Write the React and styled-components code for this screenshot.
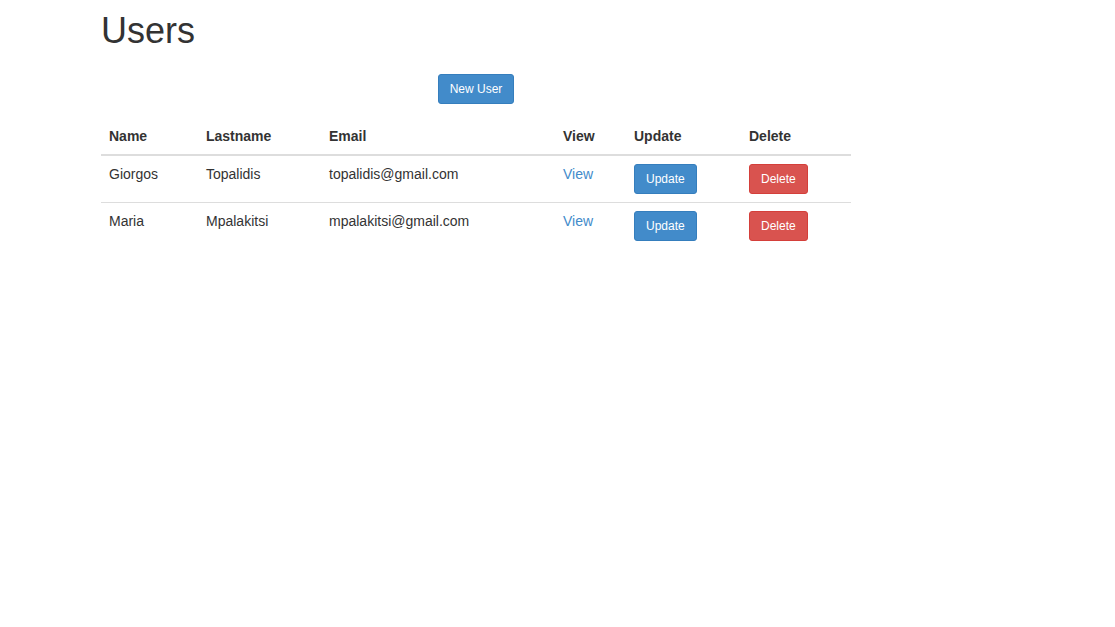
import React from 'react'
import styled, { createGlobalStyle } from 'styled-components'

const GlobalStyle = createGlobalStyle`
  body {
    margin: 0;
    font-family: "Liberation Sans", Arial, sans-serif;
    font-size: 14px;
    line-height: 1.42857;
    color: #333;
    background: #fff;
  }
`;

const Page = styled.div`
  padding: 0 0 0 101px;
`;

const Content = styled.div`
  width: 750px;
`;

const Title = styled.h1`
  font-size: 36px;
  font-weight: 500;
  line-height: 1.1;
  margin: 11px 0 0;
`;

const Toolbar = styled.div`
  display: flex;
  justify-content: center;
  margin-top: 23px;
  margin-bottom: 14px;
`;

const Button = styled.button`
  font-family: inherit;
  font-size: 12px;
  line-height: 1.5;
  padding: 5px 11px;
  border-radius: 3px;
  border: 1px solid ${p => (p.danger ? '#d43f3a' : '#357ebd')};
  background: ${p => (p.danger ? '#d9534f' : '#428bca')};
  color: #fff;
  cursor: pointer;
`;

const Table = styled.table`
  width: 100%;
  border-collapse: collapse;
  border-spacing: 0;
`;

const Th = styled.th`
  box-sizing: border-box;
  text-align: left;
  font-weight: bold;
  padding: 8px;
  line-height: 20px;
  vertical-align: bottom;
  border-bottom: 2px solid #ddd;
  width: ${p => p.w}px;
`;

const Td = styled.td`
  padding: 8px;
  line-height: 20px;
  vertical-align: top;
  border-top: 1px solid #ddd;
`;

const Link = styled.a`
  color: #428bca;
  text-decoration: none;
`;

const users = [
  { name: 'Giorgos', lastname: 'Topalidis', email: 'topalidis@gmail.com' },
  { name: 'Maria', lastname: 'Mpalakitsi', email: 'mpalakitsi@gmail.com' },
];

export default function App() {
  return (
    <Page>
      <GlobalStyle />
      <Content>
        <Title>Users</Title>
        <Toolbar>
          <Button>New User</Button>
        </Toolbar>
        <Table>
          <thead>
            <tr>
              <Th w={97}>Name</Th>
              <Th w={123}>Lastname</Th>
              <Th w={234}>Email</Th>
              <Th w={71}>View</Th>
              <Th w={115}>Update</Th>
              <Th w={110}>Delete</Th>
            </tr>
          </thead>
          <tbody>
            {users.map(u => (
              <tr key={u.email}>
                <Td>{u.name}</Td>
                <Td>{u.lastname}</Td>
                <Td>{u.email}</Td>
                <Td><Link href="#">View</Link></Td>
                <Td><Button>Update</Button></Td>
                <Td><Button danger>Delete</Button></Td>
              </tr>
            ))}
          </tbody>
        </Table>
      </Content>
    </Page>
  )
}
